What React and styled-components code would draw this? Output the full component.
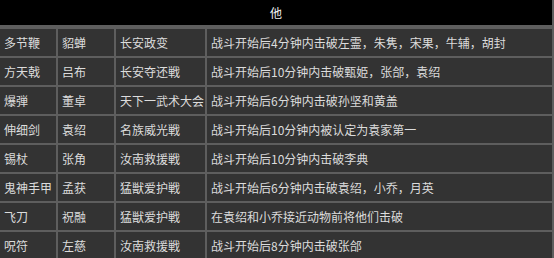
import React from 'react';
import styled, { createGlobalStyle } from 'styled-components';

const GlobalStyle = createGlobalStyle`
  html, body {
    margin: 0;
    padding: 0;
    background: #2f2f2f;
    overflow: hidden;
  }
`;

const rows = [
  ['多节鞭', '貂蝉', '长安政变', '战斗开始后4分钟内击破左霊，朱隽，宋果，牛辅，胡封'],
  ['方天戟', '吕布', '长安夺还戦', '战斗开始后10分钟内击破甄姫，张郃，袁绍'],
  ['爆弾', '董卓', '天下一武术大会', '战斗开始后6分钟内击破孙坚和黄盖'],
  ['伸细剑', '袁绍', '名族威光戦', '战斗开始后10分钟内被认定为袁家第一'],
  ['锡杖', '张角', '汝南救援戦', '战斗开始后10分钟内击破李典'],
  ['鬼神手甲', '孟获', '猛獣爱护戦', '战斗开始后6分钟内击破袁绍，小乔，月英'],
  ['飞刀', '祝融', '猛獣爱护戦', '在袁绍和小乔接近动物前将他们击破'],
  ['呪符', '左慈', '汝南救援戦', '战斗开始后8分钟内击破张郃'],
];

export default function App() {
  return (
    <>
      <GlobalStyle />
      <Grid>
        <Header>他</Header>
        {rows.map((row) =>
          row.map((text, i) => <Cell key={row[0] + i}>{text}</Cell>)
        )}
      </Grid>
    </>
  );
}

const Grid = styled.div`
  display: grid;
  grid-template-columns: 56px 56px 89px 1fr;
  grid-auto-rows: 27px;
  gap: 2px;
  width: 552px;
  padding-right: 2px;
  background: #5e5e5e;
  font-family: 'Noto Sans CJK SC', 'Noto Sans', sans-serif;
  font-size: 12px;
`;

const Header = styled.div`
  grid-column: 1 / -1;
  height: 26px;
  margin-top: -1px;
  display: flex;
  align-items: center;
  justify-content: center;
  background: #000;
  color: #f2f2f2;
`;

const Cell = styled.div`
  display: flex;
  align-items: center;
  padding-left: 4px;
  background: #333333;
  color: #dcdcdc;
  white-space: nowrap;
  overflow: hidden;
`;
